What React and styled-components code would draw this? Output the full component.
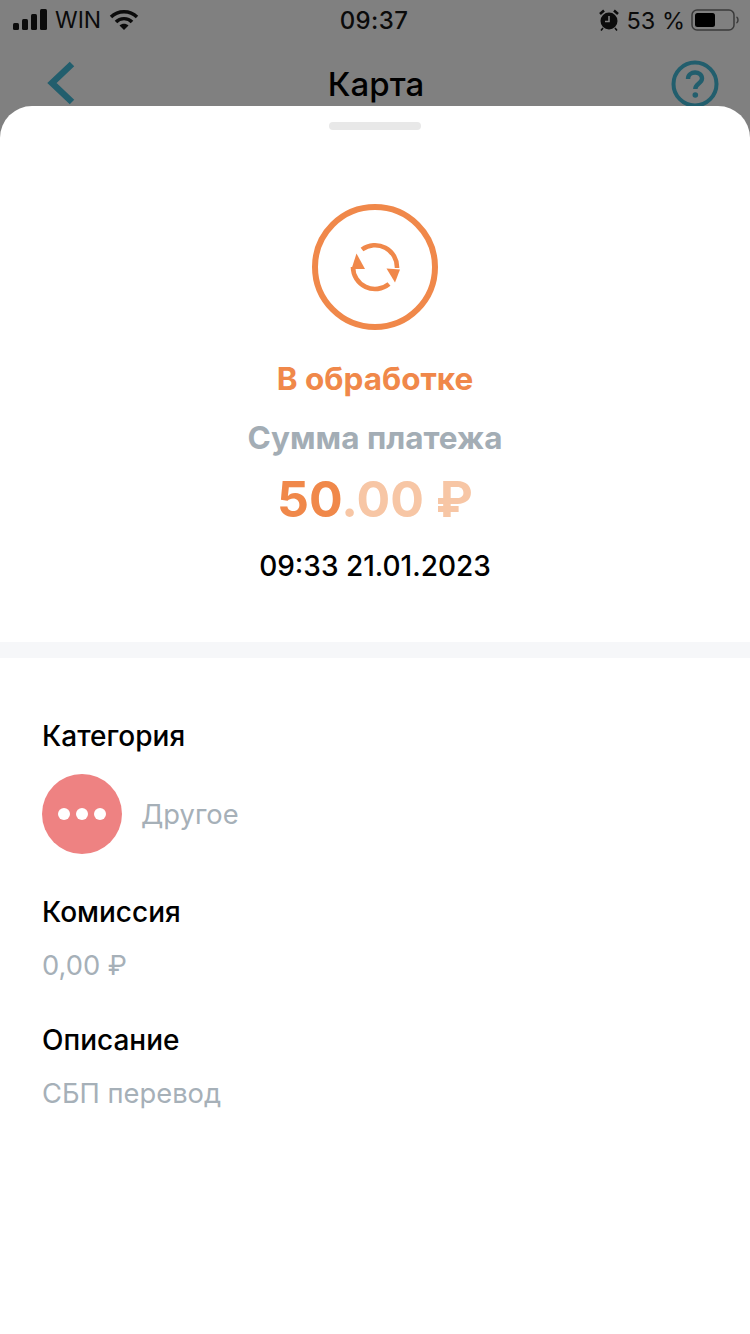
import React from "react";
import styled, { createGlobalStyle } from "styled-components";

const Global = createGlobalStyle`
  html, body { margin: 0; padding: 0; background: #808080; }
  * { box-sizing: border-box; }
`;
const Page = styled.div`
  position: relative; width: 750px; height: 1334px; overflow: hidden;
  background: #808080; font-family: Inter, "Noto Sans", sans-serif; color: #000;
`;
const StatusBar = styled.div`
  height: 40px; padding: 0 11px 0 13px; display: grid; grid-template-columns: 1fr auto 1fr; align-items: center;
  font-size: 23.5px; color: #0b0b0b;
`;
const StatusLeft = styled.div`display: flex; align-items: center; gap: 6px; span { margin-right: 2px; font-size: 23px; }`;
const StatusRight = styled.div`display: flex; align-items: center; justify-content: flex-end; gap: 8px; span { margin-right: -2px; }`;
const Clock = styled.div`font-weight: 500; font-size: 24px; letter-spacing: .4px; margin-right: 4px;`;
const Nav = styled.div`
  height: 66px; padding: 21px 31px 0 47px; display: flex; align-items: flex-start; justify-content: space-between;
`;
const NavTitle = styled.div`font-size: 33px; font-weight: 500; line-height: 48px; margin-top: -1px; margin-left: 6px;`;
const Sheet = styled.div`
  position: absolute; left: 0; right: 0; top: 106px; bottom: 0; background: #fff;
  border-radius: 32px 32px 0 0; padding-top: 16px;
`;
const Handle = styled.div`width: 92px; height: 8px; border-radius: 4px; background: #e8e8e8; margin: 0 auto;`;
const Summary = styled.div`
  display: flex; flex-direction: column; align-items: center; padding-top: 74px; height: 528px; border-bottom: 16px solid #f6f7f9;
`;
const StatusCircle = styled.div`
  width: 126px; height: 126px; border-radius: 50%; border: 6px solid #f0884a; display: flex; align-items: center; justify-content: center;
`;
const StatusText = styled.div`font-size: 31.5px; font-weight: 700; color: #f0884a; line-height: 40px; margin-top: 29px;`;
const AmountLabel = styled.div`font-size: 31.5px; font-weight: 700; color: #a3adb5; line-height: 40px; margin-top: 19px;`;
const Amount = styled.div`font-size: 50px; font-weight: 700; color: #f0884a; line-height: 64px; margin-top: 9px; span { color: #f7c6a5; }`;
const DateText = styled.div`font-size: 28px; font-weight: 500; line-height: 40px; margin-top: 15px;`;
const Details = styled.div`padding: 58px 42px 0;`;
const Label = styled.div`font-size: 28px; font-weight: 500; line-height: 40px;`;
const Value = styled.div`font-size: 27.3px; color: #a6b0b8; line-height: 40px; margin-top: 14px; margin-bottom: 34px;`;
const CategoryRow = styled.div`display: flex; align-items: center; gap: 19px; margin-top: 18px; margin-bottom: 38px;`;
const CategoryIcon = styled.div`
  width: 80px; height: 80px; border-radius: 50%; background: #ee8282; display: flex; align-items: center; justify-content: center; gap: 6px;
`;
const Dot = styled.i`width: 12px; height: 12px; border-radius: 50%; background: #fff; display: block;`;
const CategoryName = styled.div`font-size: 27.3px; color: #a6b0b8;`;

const Signal = () => (
  <svg width="36" height="22" viewBox="0 0 36 22"><g fill="#0b0b0b">
    <rect x="0" y="14" width="6" height="7" rx="1.5"/><rect x="9" y="10" width="6" height="11" rx="1.5"/>
    <rect x="18" y="5" width="6" height="16" rx="1.5"/><rect x="27" y="0" width="7" height="21" rx="1.5"/></g></svg>
);
const Wifi = () => (
  <svg width="30" height="22" viewBox="0 0 30 22" fill="none" stroke="#0b0b0b" strokeWidth="3.4">
    <path d="M2 8 C9 1 21 1 28 8"/><path d="M7 13 C11 8.5 19 8.5 23 13"/><path d="M15 21 L10.5 16.5 C13 14.3 17 14.3 19.5 16.5 Z" fill="#0b0b0b" stroke="none"/>
  </svg>
);
const Alarm = () => (
  <svg width="20" height="22" viewBox="0 0 20 22"><circle cx="10" cy="12" r="8.5" fill="#0b0b0b"/>
    <path d="M10 7v5.5H6" stroke="#808080" strokeWidth="1.6" fill="none"/>
    <path d="M1 5 L5 1.5 M19 5 L15 1.5" stroke="#0b0b0b" strokeWidth="2.6"/>
    <path d="M4 19l-2 2.5M16 19l2 2.5" stroke="#0b0b0b" strokeWidth="1.6"/></svg>
);
const Battery = () => (
  <svg width="48" height="24" viewBox="0 0 48 24">
    <rect x="1" y="2" width="42" height="20" rx="5" fill="none" stroke="#3a3a3a" strokeWidth="1.5"/>
    <rect x="4" y="5" width="20" height="14" rx="2.5" fill="#000"/>
    <path d="M45.5 9 C47.5 10 47.5 14 45.5 15" fill="none" stroke="#3a3a3a" strokeWidth="1.5"/>
  </svg>
);
const Back = () => (
  <svg width="28" height="44" viewBox="0 0 28 44" fill="none" stroke="#225e6d" strokeWidth="6.5"><path d="M25 3 L5 22 L25 41"/></svg>
);
const Help = () => (
  <svg width="48" height="48" viewBox="0 0 48 48" style={{ marginTop: -1 }} fill="none" stroke="#225e6d">
    <circle cx="24" cy="24" r="21.5" strokeWidth="4"/>
    <path d="M17 19 C17 10.5 31 10.5 31 18.5 C31 23.5 24.3 23.5 24.3 29" strokeWidth="4.4"/>
    <circle cx="24.3" cy="35" r="2.8" fill="#225e6d" stroke="none"/>
  </svg>
);
const Sync = () => (
  <svg width="52" height="52" viewBox="-2 -2 52 52" fill="none" stroke="#f0884a" strokeWidth="4.6" style={{ marginTop: -1 }}>
    <path d="M11 6.5 A22 22 0 0 1 46 25"/>
    <path d="M38 41 A22 22 0 0 1 2 24"/>
    <path d="M5.5 10.5 L14 26 L0.5 26 Z" fill="#f0884a" stroke="none"/>
    <path d="M35.5 25.5 L49 26.5 L44 39.5 Z" fill="#f0884a" stroke="none"/>
  </svg>
);

export default function App() {
  return (
    <Page>
      <Global />
      <StatusBar>
        <StatusLeft><Signal /><span>WIN</span><Wifi /></StatusLeft>
        <Clock>09:37</Clock>
        <StatusRight><Alarm /><span>53 %</span><Battery /></StatusRight>
      </StatusBar>
      <Nav>
        <Back />
        <NavTitle>Карта</NavTitle>
        <Help />
      </Nav>
      <Sheet>
        <Handle />
        <Summary>
          <StatusCircle><Sync /></StatusCircle>
          <StatusText>В обработке</StatusText>
          <AmountLabel>Сумма платежа</AmountLabel>
          <Amount>50<span>.00 ₽</span></Amount>
          <DateText>09:33 21.01.2023</DateText>
        </Summary>
        <Details>
          <Label>Категория</Label>
          <CategoryRow>
            <CategoryIcon><Dot /><Dot /><Dot /></CategoryIcon>
            <CategoryName>Другое</CategoryName>
          </CategoryRow>
          <Label>Комиссия</Label>
          <Value>0,00 ₽</Value>
          <Label>Описание</Label>
          <Value>СБП перевод</Value>
        </Details>
      </Sheet>
    </Page>
  );
}
